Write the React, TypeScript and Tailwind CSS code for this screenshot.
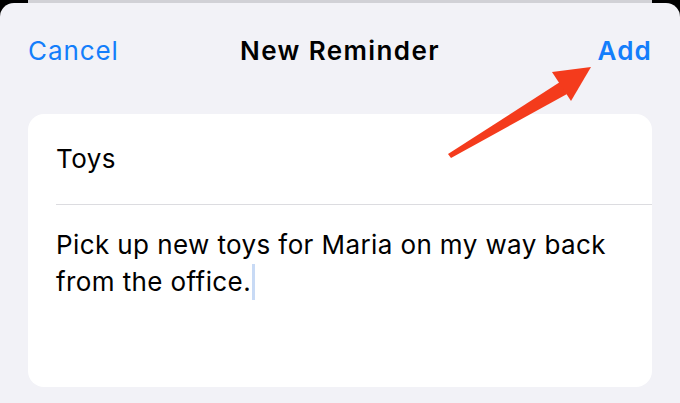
export default function App() {
  return (
    <div
      className="relative w-[680px] h-[403px] bg-black overflow-hidden flex flex-col"
      style={{ fontFamily: "Inter, 'Noto Sans', sans-serif" }}
    >
      {/* sheet behind */}
      <div className="mx-[28px] h-[3px] bg-[#d1d1d6] shrink-0" />

      {/* sheet */}
      <div className="flex-1 bg-[#f2f2f7] rounded-t-[14px] flex flex-col">
        {/* header */}
        <div className="grid grid-cols-[1fr_auto_1fr] px-[28px] pt-[31px] h-[96px] items-start">
          <span className="text-[26px] text-[#147efb] tracking-[0.9px] leading-[34px]">Cancel</span>
          <span className="text-[26px] font-semibold text-black tracking-[1.4px] leading-[34px]">New Reminder</span>
          <span className="text-[26px] font-semibold text-[#147efb] text-right tracking-[1.2px] leading-[34px]">Add</span>
        </div>

        {/* card */}
        <div className="mx-[28px] mt-[15px] h-[273px] bg-white rounded-[16px] flex flex-col">
          <div className="h-[90px] pl-[28px] flex items-center">
            <span className="text-[26px] text-black leading-[34px] tracking-[0.4px]">Toys</span>
          </div>
          <div className="ml-[28px] h-px bg-[#dcdce0]" />
          <div className="pl-[28px] pr-[20px] pt-[21px]">
            <p className="text-[26px] text-black leading-[37px] tracking-[0.4px] whitespace-nowrap">
              Pick up new toys for Maria on my way back
              <br />
              from the office.
              <span className="inline-block w-[3px] h-[36px] bg-[#c8daf5] align-[-9px] ml-[1px]" />
            </p>
          </div>
        </div>
      </div>

      {/* annotation arrow */}
      <svg className="absolute left-0 top-0 pointer-events-none" width="680" height="403" viewBox="0 0 680 403">
        <polygon points="448,154 560,82 567,94 451,158" fill="#f43b1c" />
        <polygon points="591,67 552,72 571,101" fill="#f43b1c" />
      </svg>
    </div>
  );
}
